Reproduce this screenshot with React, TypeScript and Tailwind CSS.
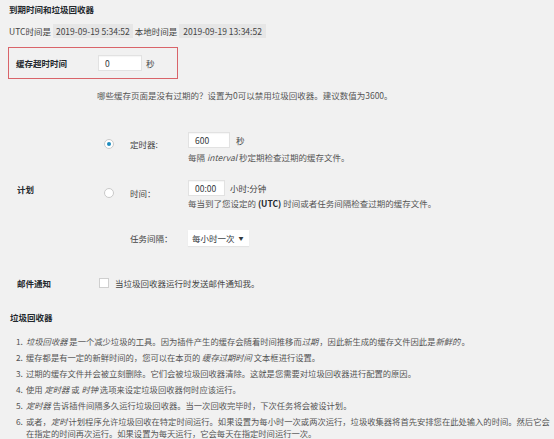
const font = { fontFamily: '"Noto Sans CJK SC", "Noto Sans", sans-serif' }

const listItems = [
    <>
        <em>垃圾回收器</em> 是一个减少垃圾的工具。因为插件产生的缓存会随着时间推移而<em className="pr-[1px]">过期</em>，因此新生成的缓存文件因此是<em className="pr-[1px]">新鲜的</em>。
    </>,
    <>
        缓存都是有一定的新鲜时间的，您可以在本页的 <em>缓存过期时间</em> 文本框进行设置。
    </>,
    <>过期的缓存文件并会被立刻删除。它们会被垃圾回收器清除。这就是您需要对垃圾回收器进行配置的原因。</>,
    <>
        使用 <em>定时器</em> 或 <em>时钟</em> 选项来设定垃圾回收器何时应该运行。
    </>,
    <>
        <em>定时器</em> 告诉插件间隔多久运行垃圾回收器。当一次回收完毕时，下次任务将会被设计划。
    </>,
    <>
        或者，<em className="pr-[1px]">定时</em>计划程序允许垃圾回收在特定时间运行。如果设置为每小时一次或两次运行，垃圾收集器将首先安排您在此处输入的时间。然后它会在指定的时间再次运行。如果设置为每天运行，它会每天在指定时间运行一次。
    </>,
]

function TextInput({ value, width }: { value: string; width: string }) {
    return (
        <div
            className={`${width} h-[16px] flex items-center pl-[6px] bg-white border border-[#e2e2e2] shadow-[inset_0_1px_1px_rgba(0,0,0,0.04)] text-[#32373c] text-[8.5px] leading-[12px]`}
        >
            {value}
        </div>
    )
}

export default function App() {
    return (
        <div
            className="w-[554px] h-[439px] overflow-hidden bg-[#f1f1f1] text-[#444] text-[8.5px] leading-[12px]"
            style={font}
        >
            {/* Title */}
            <h2 className="mt-[3px] ml-[9px] font-bold text-[#23282d] leading-[12px]">到期时间和垃圾回收器</h2>

            {/* UTC row */}
            <div className="mt-[9px] ml-[9px] flex items-center h-[14px]">
                <span>UTC时间是</span>
                <span className="ml-[2px] h-[14px] px-[3px] flex items-center bg-[#e6e6e6]">2019-09-19 5:34:52</span>
                <span className="ml-[2px]">本地时间是</span>
                <span className="ml-[2px] h-[14px] px-[4px] flex items-center bg-[#e6e6e6]">2019-09-19 13:34:52</span>
            </div>

            {/* Cache timeout (highlighted) */}
            <div className="mt-[9px] ml-[8px] w-[170px] h-[32px] flex items-center border border-[#d9646a] pl-[7px]">
                <div className="w-[82px] font-bold text-[#23282d]">缓存超时时间</div>
                <TextInput value="0" width="w-[44px]" />
                <span className="ml-[4px]">秒</span>
            </div>

            <p className="mt-[10px] ml-[97px] text-[#555]">哪些缓存页面是没有过期的？设置为0可以禁用垃圾回收器。建议数值为3600。</p>

            {/* Schedule */}
            <div className="mt-[31px] flex items-center">
                <div className="w-[97px] pl-[17px] font-bold text-[#23282d]">计划</div>
                <div className="flex flex-col">
                    {/* timer */}
                    <div className="flex items-start">
                        <div className="w-[33px] pl-[7px] mt-[7px]">
                            <div className="w-[10px] h-[10px] rounded-full bg-white border border-[#c9c9c9] flex items-center justify-center">
                                <div className="w-[4px] h-[4px] rounded-full bg-[#1e8cbe]" />
                            </div>
                        </div>
                        <div className="w-[58px] mt-[6px]">定时器:</div>
                        <div className="flex flex-col">
                            <div className="flex items-center">
                                <TextInput value="600" width="w-[42px]" />
                                <span className="ml-[6px]">秒</span>
                            </div>
                            <p className="mt-[3px] text-[#555]">
                                每隔 <em>interval</em> 秒定期检查过期的缓存文件。
                            </p>
                        </div>
                    </div>
                    {/* clock */}
                    <div className="mt-[17px] flex items-start">
                        <div className="w-[33px] pl-[7px] mt-[8px]">
                            <div className="w-[10px] h-[10px] rounded-full bg-white border border-[#c9c9c9]" />
                        </div>
                        <div className="w-[58px] mt-[7px]">时间：</div>
                        <div className="flex flex-col">
                            <div className="flex items-center">
                                <TextInput value="00:00" width="w-[37px]" />
                                <span className="ml-[5px]">小时:分钟</span>
                            </div>
                            <p className="mt-[1px] text-[#555]">
                                每当到了您设定的 <strong className="text-[#23282d]">(UTC)</strong> 时间或者任务间隔检查过期的缓存文件。
                            </p>
                        </div>
                    </div>
                    {/* interval */}
                    <div className="mt-[21px] flex items-center">
                        <div className="w-[33px]" />
                        <div className="w-[58px]">任务间隔：</div>
                        <div className="w-[61px] h-[16px] bg-white flex items-center pl-[4px] text-[#32373c] shadow-[0_1px_1px_rgba(0,0,0,0.05)]">
                            每小时一次
                            <span className="ml-[4px] text-[5px]">▼</span>
                        </div>
                    </div>
                </div>
            </div>

            {/* Mail notice */}
            <div className="mt-[31px] flex items-center h-[12px]">
                <div className="w-[97px] pl-[17px] font-bold text-[#23282d]">邮件通知</div>
                <div className="ml-[2px] w-[10px] h-[10px] bg-white border border-[#cfcfcf]" />
                <span className="ml-[6px]">当垃圾回收器运行时发送邮件通知我。</span>
            </div>

            {/* Help */}
            <h3 className="mt-[22px] ml-[10px] font-semibold text-[#23282d]">垃圾回收器</h3>
            <ol className="mt-[12px] ml-[16px] flex flex-col gap-[4px] text-[8.3px] text-[#555]">
                {listItems.map((item, i) => (
                    <li key={i} className="flex leading-[12px]">
                        <span className="w-[10px] shrink-0">{i + 1}.</span>
                        <span className="pr-[2px]">{item}</span>
                    </li>
                ))}
            </ol>
        </div>
    )
}
